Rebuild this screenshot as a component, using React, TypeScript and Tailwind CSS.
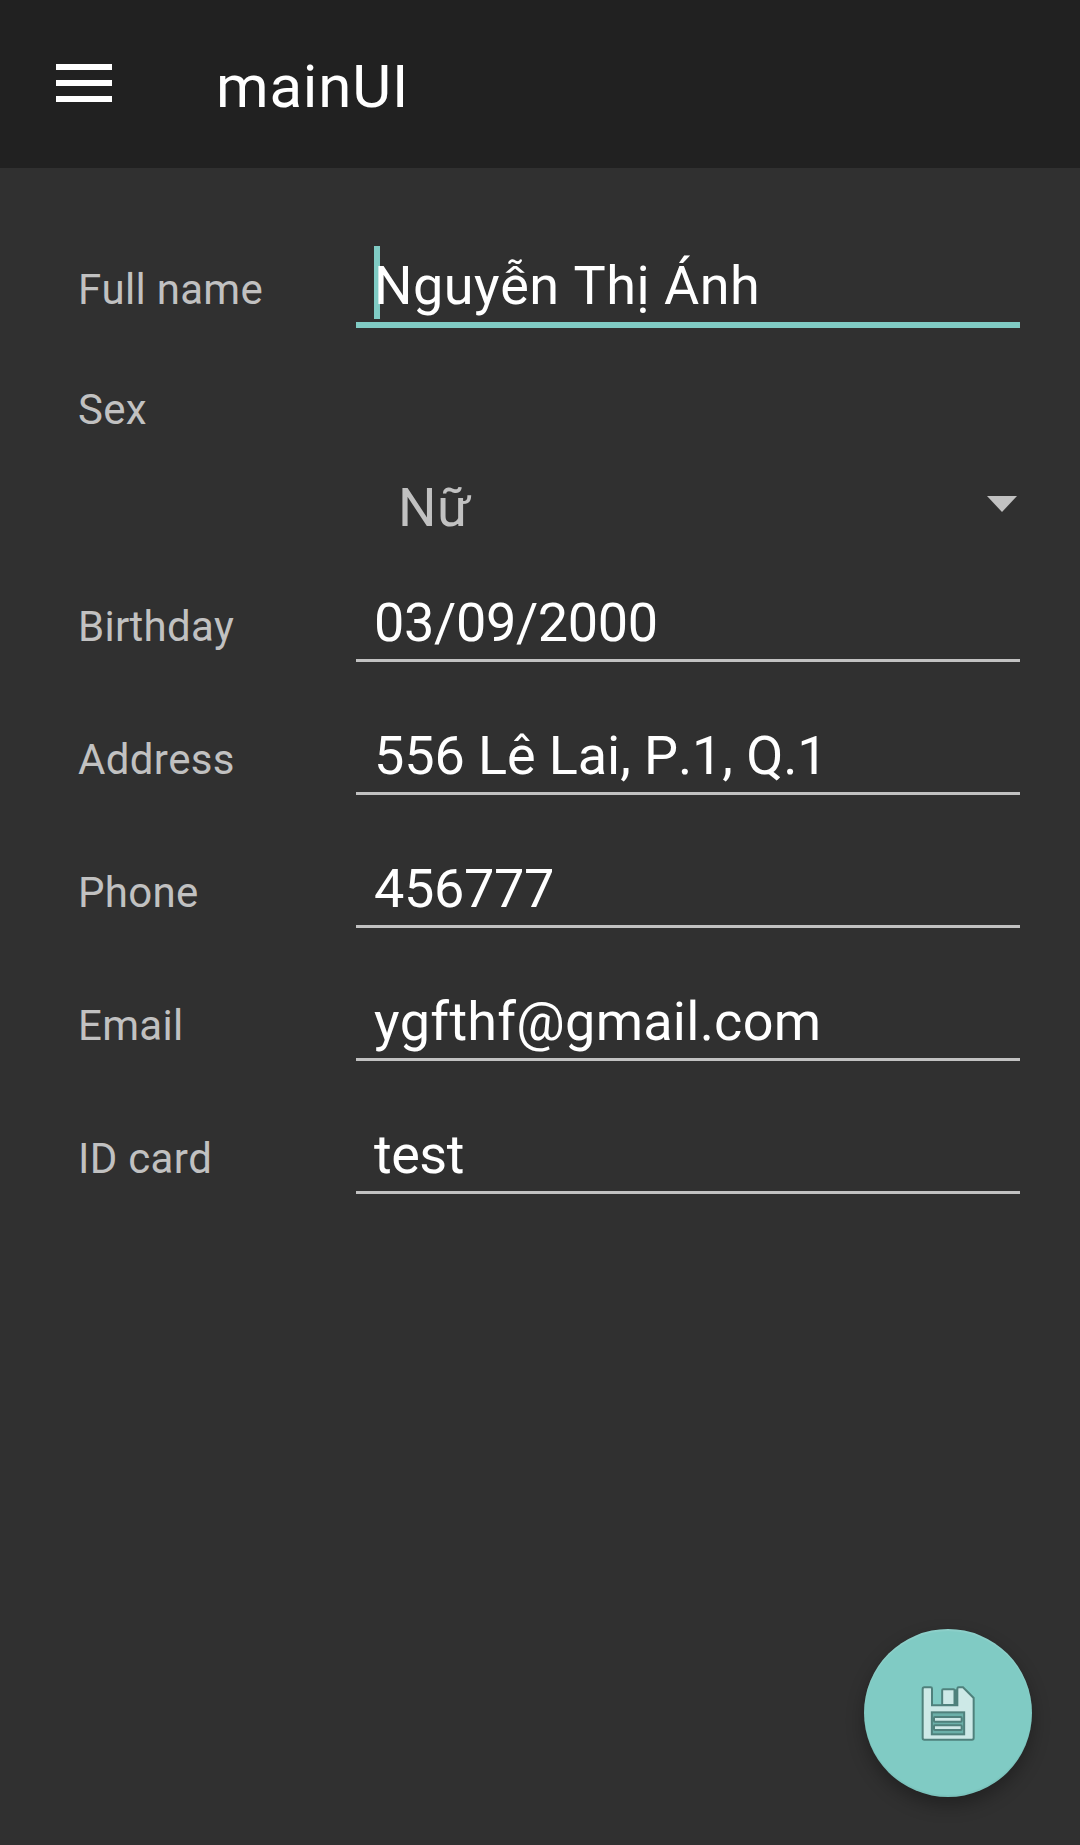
const rows = [
  { label: "Birthday", value: "03/09/2000", tracking: "tracking-[-0.35px]" },
  { label: "Address", value: "556 Lê Lai, P.1, Q.1", tracking: "tracking-[-0.1px]" },
  { label: "Phone", value: "456777", tracking: "tracking-[-0.35px]" },
  { label: "Email", value: "ygfthf@gmail.com", tracking: "tracking-[0.25px]" },
  { label: "ID card", value: "test", tracking: "tracking-[-0.5px]" },
];

function Label({ text }: { text: string }) {
  return <div className="w-[278px] shrink-0 text-[42px] leading-[49px] tracking-[0.3px] text-[#c1c1c1]">{text}</div>;
}

function SaveIcon() {
  return (
    <svg className="size-[76px]" viewBox="0 0 228 228" stroke="#4f817c" strokeWidth="6">
      <path
        d="M43 37H62Q66 37 66 41V91H142V41Q142 37 146 37H159L191 69V189Q191 194 186 194H43Q38 194 38 189V42Q38 37 43 37Z"
        fill="#cde9e7"
      />
      <path d="M133 43H142V91H133Z" fill="#4f817c" stroke="none" />
      <rect x="96.500" y="43" width="37" height="47" rx="3" fill="#cde9e7" />
      <rect x="65.500" y="112" width="97" height="66" fill="#6bb0a9" />
      <rect x="72" y="126" width="83" height="14" rx="3" fill="#cde9e7" />
      <rect x="72" y="151" width="83" height="14" rx="3" fill="#cde9e7" />
    </svg>
  );
}

export default function App() {
  return (
    <div className="relative flex h-[1845px] w-[1080px] flex-col overflow-hidden bg-[#303030] font-['Roboto',sans-serif] [font-kerning:none]">
      <header className="flex h-[168px] shrink-0 items-start bg-[#212121] pl-14">
        <button aria-label="Menu" className="mt-16 flex w-14 flex-col gap-[10px]">
          <span className="h-[6px] bg-white" />
          <span className="h-[6px] bg-white" />
          <span className="h-[6px] bg-white" />
        </button>
        <h1 className="mt-[51px] ml-[104px] text-[60px] leading-[71px] tracking-[0.8px] text-white">mainUI</h1>
      </header>
      <main className="flex flex-col pt-[74px] pr-[60px] pl-[78px]">
        <div className="flex h-[86px]">
          <div className="pt-[23px]"><Label text="Full name" /></div>
          <div className="relative h-[86px] flex-1 border-b-[6px] border-[#80cbc4] pt-[12px] pl-[18px] text-[54px] leading-[63px] tracking-[0.5px] whitespace-nowrap text-white">
            <span className="absolute top-[4px] left-[18px] h-[73px] w-[6px] bg-[#80cbc4]" />
            <span className="relative">Nguyễn Thị Ánh</span>
          </div>
        </div>
        <div className="mt-[57px]"><Label text="Sex" /></div>
        <div className="mt-[42px] ml-[278px] flex h-[80px] items-start justify-between pl-[42px] text-[54px] leading-[63px] tracking-[0.5px] text-[#c1c1c1]">
          <span>Nữ</span>
          <svg className="mt-5 mr-[3px] h-4 w-[30px]" viewBox="0 0 30 16"><path d="M0 0h30L15 16z" fill="#c1c1c1" /></svg>
        </div>
        {rows.map((r) => (
          <div key={r.label} className="flex h-[133px]">
            <div className="pt-[46px]"><Label text={r.label} /></div>
            <div className="h-[106px] flex-1 border-b-[3px] border-[#c1c1c1] pt-[35px] pl-[18px] text-[54px] leading-[63px] whitespace-nowrap text-white">
              <span className={r.tracking}>{r.value}</span>
            </div>
          </div>
        ))}
      </main>
      <button aria-label="Save" className="absolute top-[1629px] left-[864px] flex size-42 items-center justify-center rounded-full bg-[#80cbc4] shadow-[0_8px_18px_rgba(0,0,0,0.3),inset_0_2px_1px_rgba(255,255,255,0.1),inset_0_-2px_1px_rgba(0,0,0,0.04)]">
        <SaveIcon />
      </button>
    </div>
  );
}
